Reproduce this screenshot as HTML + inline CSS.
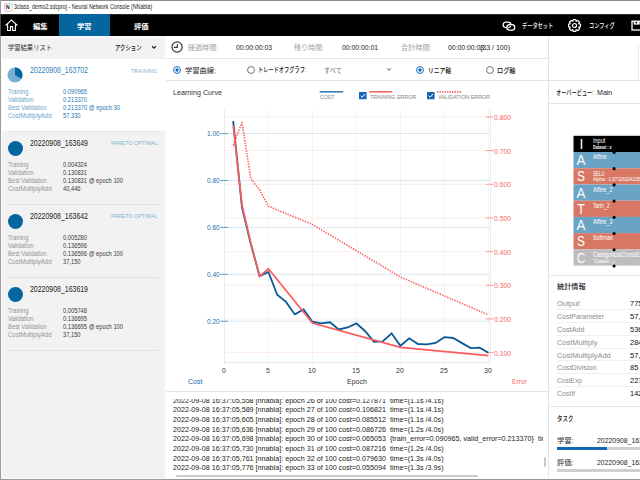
<!DOCTYPE html>
<html lang="ja"><head><meta charset="utf-8"><title>Neural Network Console</title>
<style>
html,body{margin:0;padding:0;background:#fff;}
body{width:640px;height:480px;overflow:hidden;position:relative;font-family:"Liberation Sans", "Noto Sans CJK JP", sans-serif;}
#app{position:absolute;left:0;top:0;width:640px;height:480px;overflow:hidden;background:#fff;}
#app div,#app svg{position:absolute;}
.t{position:absolute;white-space:pre;transform-origin:0 50%;display:block;}
</style></head>
<body>
<div id="app">
<div class="titlebar" style="left:0;top:0;width:640px;height:14px;background:#fff;"><svg style="left:3.5px;top:2.5px;" width="9" height="9" viewBox="0 0 9 9"><path d="M0.8 4.5 V2 A1.2 1.2 0 0 1 2 0.8 H4.5" fill="none" stroke="#ee8d84" stroke-width="0.8"/><path d="M4.5 0.8 H7 A1.2 1.2 0 0 1 8.2 2 V4.5" fill="none" stroke="#86bfe6" stroke-width="0.8"/><path d="M8.2 4.5 V7 A1.2 1.2 0 0 1 7 8.2 H4.5" fill="none" stroke="#f0b878" stroke-width="0.8"/><path d="M4.5 8.2 H2 A1.2 1.2 0 0 1 0.8 7 V4.5" fill="none" stroke="#b7a2dc" stroke-width="0.8"/></svg><span id="t0" class="t" style="left:6.30px;top:4.46px;font-size:5.2px;line-height:7.28px;color:#111;font-weight:700;transform:scaleX(0.9867);">N</span><span id="t1" class="t" style="left:14.25px;top:2.38px;font-size:6.6px;line-height:9.24px;color:#1a1a1a;transform:scaleX(0.8077);">3class_demo2.sdcproj - Neural Network Console (NNabla)</span></div><div class="nav" style="left:0;top:14px;width:640px;height:22px;background:#000;"><div style="left:0;top:-14px;width:640px;height:36px;"><svg style="left:5px;top:19px;" width="13" height="12.5" viewBox="0 0 13 12.5"><path d="M0.6 6.5 L6.5 0.9 L12.4 6.5 M2.6 5.6 V11.5 H5.4 V7.6 H7.6 V11.5 H10.4 V5.6" fill="none" stroke="#fff" stroke-width="1.1" stroke-linejoin="miter"/></svg><div class="ln" style="left:0px;top:14px;width:640px;height:1px;background:#2a2a2a;"></div><span id="t2" class="t" style="left:33.00px;top:21.88px;font-size:6.75px;line-height:9.45px;color:#fff;font-weight:700;transform:scaleX(1.0913);">編集</span><div style="left:59px;top:14px;width:51px;height:22px;background:#04659f;"></div><span id="t3" class="t" style="left:77.00px;top:21.88px;font-size:6.75px;line-height:9.45px;color:#fff;font-weight:700;transform:scaleX(1.0728);">学習</span><span id="t4" class="t" style="left:134.00px;top:21.88px;font-size:6.75px;line-height:9.45px;color:#fff;font-weight:700;transform:scaleX(1.0728);">評価</span><svg style="left:502px;top:20.5px;" width="13.5" height="10" viewBox="0 0 13.5 10"><rect x="1.1" y="1.1" width="7.8" height="5.4" rx="2.7" fill="none" stroke="#fff" stroke-width="1.25"/><rect x="4.9" y="3.7" width="7.8" height="5.4" rx="2.7" fill="#000" stroke="#fff" stroke-width="1.25"/><path d="M8.9 4.6 A2.7 2.7 0 0 1 6.2 6.5" fill="none" stroke="#fff" stroke-width="1.25"/></svg><span id="t5" class="t" style="left:522.25px;top:21.48px;font-size:6.75px;line-height:9.45px;color:#fff;font-weight:500;transform:scaleX(0.7713);">データセット</span><svg style="left:568.25px;top:18.5px;" width="13" height="13" viewBox="0 0 13 13"><polygon points="5.19,0.64 7.81,0.64 8.21,2.34 8.23,2.35 9.71,1.43 11.57,3.29 10.65,4.77 10.66,4.79 12.36,5.19 12.36,7.81 10.66,8.21 10.65,8.23 11.57,9.71 9.71,11.57 8.23,10.65 8.21,10.66 7.81,12.36 5.19,12.36 4.79,10.66 4.77,10.65 3.29,11.57 1.43,9.71 2.35,8.23 2.34,8.21 0.64,7.81 0.64,5.19 2.34,4.79 2.35,4.77 1.43,3.29 3.29,1.43 4.77,2.35 4.79,2.34" fill="none" stroke="#fff" stroke-width="1.2" stroke-linejoin="round"/><circle cx="6.5" cy="6.5" r="2" fill="none" stroke="#fff" stroke-width="1.2"/></svg><span id="t6" class="t" style="left:589.40px;top:21.38px;font-size:6.75px;line-height:9.45px;color:#fff;font-weight:500;transform:scaleX(0.7660);">コンフィグ</span><svg style="left:631px;top:19.5px;" width="12" height="11" viewBox="0 0 12 11"><rect x="1" y="1.2" width="11" height="8.8" fill="none" stroke="#fff" stroke-width="1.3"/><rect x="2.7" y="1.2" width="6" height="3.4" fill="#fff"/><rect x="4.4" y="1.9" width="1.7" height="1.5" fill="#000"/></svg></div></div><div class="left" style="left:0;top:36px;width:165px;height:444px;background:#f2f2f2;"><div style="left:0;top:-36px;width:166px;height:480px;"><div class="ln" style="left:1px;top:36px;width:164px;height:1px;background:#fbfbfb;"></div><span id="t7" class="t" style="left:8.00px;top:43.00px;font-size:6.99px;line-height:9.79px;color:#333;transform:scaleX(0.8997);">学習結果リスト</span><span id="t8" class="t" style="left:115.30px;top:43.00px;font-size:6.99px;line-height:9.79px;color:#111;font-weight:500;transform:scaleX(0.7664);">アクション</span><svg style="left:151.2px;top:44.6px;" width="6" height="5" viewBox="0 0 6 5"><path d="M1.1 1.3 L3 3.2 L4.9 1.3" fill="none" stroke="#222" stroke-width="1.25"/></svg><div style="left:1px;top:59px;width:164px;height:72px;background:#fff;"></div><div class="ln" style="left:8px;top:131px;width:150px;height:1px;background:#e0e0e0;"></div><svg style="left:7px;top:67px;" width="16" height="16" viewBox="0 0 16 16"><circle cx="8" cy="8" r="7.5" fill="#76afd3"/><path d="M8 8 L8 0.5 A7.5 7.5 0 0 1 14.56 11.64 Z" fill="#05659f"/></svg><span id="t9" class="t" style="left:30.00px;top:65.26px;font-size:8.2px;line-height:11.48px;color:#2f7fb7;transform:scaleX(0.8490);">20220908_163702</span><span id="t10" class="t" style="left:131.25px;top:66.66px;font-size:6.2px;line-height:8.68px;color:#7fb3d5;transform:scaleX(0.8875);">TRAINING</span><span id="t11" class="t" style="left:8.00px;top:87.24px;font-size:6.8px;line-height:9.52px;color:#6ba6cd;transform:scaleX(0.8432);">Training</span><span id="t12" class="t" style="left:62.50px;top:87.24px;font-size:6.8px;line-height:9.52px;color:#2779b1;transform:scaleX(0.8463);">0.090965</span><span id="t13" class="t" style="left:8.00px;top:95.14px;font-size:6.8px;line-height:9.52px;color:#6ba6cd;transform:scaleX(0.8685);">Validation</span><span id="t14" class="t" style="left:62.50px;top:95.14px;font-size:6.8px;line-height:9.52px;color:#2779b1;transform:scaleX(0.8463);">0.213370</span><span id="t15" class="t" style="left:8.00px;top:103.04px;font-size:6.8px;line-height:9.52px;color:#6ba6cd;transform:scaleX(0.8585);">Best Validation</span><span id="t16" class="t" style="left:62.50px;top:103.04px;font-size:6.8px;line-height:9.52px;color:#2779b1;transform:scaleX(0.8507);">0.213370 @ epoch 30</span><span id="t17" class="t" style="left:8.00px;top:110.94px;font-size:6.8px;line-height:9.52px;color:#6ba6cd;transform:scaleX(0.8858);">CostMultiplyAdd</span><span id="t18" class="t" style="left:62.50px;top:110.94px;font-size:6.8px;line-height:9.52px;color:#2779b1;transform:scaleX(0.8415);">57,330</span><div class="ln" style="left:8px;top:204px;width:150px;height:1px;background:#e0e0e0;"></div><div style="left:7.5px;top:140.5px;width:15px;height:15px;background:#05659f;border-radius:50%;"></div><span id="t19" class="t" style="left:30.00px;top:138.26px;font-size:8.2px;line-height:11.48px;color:#222;transform:scaleX(0.8490);">20220908_163649</span><span id="t20" class="t" style="left:111.00px;top:138.96px;font-size:6.2px;line-height:8.68px;color:#7fb3d5;transform:scaleX(0.8651);">PARETO OPTIMAL</span><span id="t21" class="t" style="left:8.00px;top:160.24px;font-size:6.8px;line-height:9.52px;color:#939393;transform:scaleX(0.8432);">Training</span><span id="t22" class="t" style="left:62.50px;top:160.24px;font-size:6.8px;line-height:9.52px;color:#3c3c3c;transform:scaleX(0.8463);">0.004324</span><span id="t23" class="t" style="left:8.00px;top:168.14px;font-size:6.8px;line-height:9.52px;color:#939393;transform:scaleX(0.8685);">Validation</span><span id="t24" class="t" style="left:62.50px;top:168.14px;font-size:6.8px;line-height:9.52px;color:#3c3c3c;transform:scaleX(0.8463);">0.130831</span><span id="t25" class="t" style="left:8.00px;top:176.04px;font-size:6.8px;line-height:9.52px;color:#939393;transform:scaleX(0.8585);">Best Validation</span><span id="t26" class="t" style="left:62.50px;top:176.04px;font-size:6.8px;line-height:9.52px;color:#3c3c3c;transform:scaleX(0.8477);">0.130831 @ epoch 100</span><span id="t27" class="t" style="left:8.00px;top:183.94px;font-size:6.8px;line-height:9.52px;color:#939393;transform:scaleX(0.8858);">CostMultiplyAdd</span><span id="t28" class="t" style="left:62.50px;top:183.94px;font-size:6.8px;line-height:9.52px;color:#3c3c3c;transform:scaleX(0.8415);">40,446</span><div class="ln" style="left:8px;top:277px;width:150px;height:1px;background:#e0e0e0;"></div><div style="left:7.5px;top:213.5px;width:15px;height:15px;background:#05659f;border-radius:50%;"></div><span id="t29" class="t" style="left:30.00px;top:211.26px;font-size:8.2px;line-height:11.48px;color:#222;transform:scaleX(0.8490);">20220908_163642</span><span id="t30" class="t" style="left:111.00px;top:211.96px;font-size:6.2px;line-height:8.68px;color:#7fb3d5;transform:scaleX(0.8651);">PARETO OPTIMAL</span><span id="t31" class="t" style="left:8.00px;top:233.24px;font-size:6.8px;line-height:9.52px;color:#939393;transform:scaleX(0.8432);">Training</span><span id="t32" class="t" style="left:62.50px;top:233.24px;font-size:6.8px;line-height:9.52px;color:#3c3c3c;transform:scaleX(0.8463);">0.005280</span><span id="t33" class="t" style="left:8.00px;top:241.14px;font-size:6.8px;line-height:9.52px;color:#939393;transform:scaleX(0.8685);">Validation</span><span id="t34" class="t" style="left:62.50px;top:241.14px;font-size:6.8px;line-height:9.52px;color:#3c3c3c;transform:scaleX(0.8463);">0.136596</span><span id="t35" class="t" style="left:8.00px;top:249.04px;font-size:6.8px;line-height:9.52px;color:#939393;transform:scaleX(0.8585);">Best Validation</span><span id="t36" class="t" style="left:62.50px;top:249.04px;font-size:6.8px;line-height:9.52px;color:#3c3c3c;transform:scaleX(0.8477);">0.136596 @ epoch 100</span><span id="t37" class="t" style="left:8.00px;top:256.94px;font-size:6.8px;line-height:9.52px;color:#939393;transform:scaleX(0.8858);">CostMultiplyAdd</span><span id="t38" class="t" style="left:62.50px;top:256.94px;font-size:6.8px;line-height:9.52px;color:#3c3c3c;transform:scaleX(0.8415);">37,150</span><div class="ln" style="left:8px;top:350px;width:150px;height:1px;background:#e0e0e0;"></div><div style="left:7.5px;top:286.5px;width:15px;height:15px;background:#05659f;border-radius:50%;"></div><span id="t39" class="t" style="left:30.00px;top:284.26px;font-size:8.2px;line-height:11.48px;color:#222;transform:scaleX(0.8490);">20220908_163619</span><span id="t40" class="t" style="left:8.00px;top:306.24px;font-size:6.8px;line-height:9.52px;color:#939393;transform:scaleX(0.8432);">Training</span><span id="t41" class="t" style="left:62.50px;top:306.24px;font-size:6.8px;line-height:9.52px;color:#3c3c3c;transform:scaleX(0.8463);">0.005748</span><span id="t42" class="t" style="left:8.00px;top:314.14px;font-size:6.8px;line-height:9.52px;color:#939393;transform:scaleX(0.8685);">Validation</span><span id="t43" class="t" style="left:62.50px;top:314.14px;font-size:6.8px;line-height:9.52px;color:#3c3c3c;transform:scaleX(0.8463);">0.136695</span><span id="t44" class="t" style="left:8.00px;top:322.04px;font-size:6.8px;line-height:9.52px;color:#939393;transform:scaleX(0.8585);">Best Validation</span><span id="t45" class="t" style="left:62.50px;top:322.04px;font-size:6.8px;line-height:9.52px;color:#3c3c3c;transform:scaleX(0.8477);">0.136695 @ epoch 100</span><span id="t46" class="t" style="left:8.00px;top:329.94px;font-size:6.8px;line-height:9.52px;color:#939393;transform:scaleX(0.8858);">CostMultiplyAdd</span><span id="t47" class="t" style="left:62.50px;top:329.94px;font-size:6.8px;line-height:9.52px;color:#3c3c3c;transform:scaleX(0.8415);">37,150</span></div></div><div class="center" style="left:165px;top:36px;width:383px;height:444px;background:#fff;"><div style="left:-165px;top:-36px;width:548px;height:480px;"><svg style="left:170.5px;top:40.9px;" width="12.2" height="12.2" viewBox="0 0 12.2 12.2"><circle cx="6.05" cy="6" r="5.1" fill="none" stroke="#333" stroke-width="1.2"/><path d="M6.35 3.1 V6.4 H2.8" fill="none" stroke="#333" stroke-width="1.1"/></svg><span id="t48" class="t" style="left:187.80px;top:43.13px;font-size:6.81px;line-height:9.53px;color:#9e9e9e;transform:scaleX(1.0386);">経過時間:</span><span id="t49" class="t" style="left:235.60px;top:43.46px;font-size:7.2px;line-height:10.08px;color:#222;transform:scaleX(0.9478);">00:00:00:03</span><span id="t50" class="t" style="left:294.20px;top:43.13px;font-size:6.81px;line-height:9.53px;color:#9e9e9e;transform:scaleX(1.0248);">残り時間:</span><span id="t51" class="t" style="left:342.00px;top:43.46px;font-size:7.2px;line-height:10.08px;color:#222;transform:scaleX(0.9478);">00:00:00:01</span><span id="t52" class="t" style="left:400.50px;top:43.13px;font-size:6.81px;line-height:9.53px;color:#9e9e9e;transform:scaleX(1.0489);">合計時間:</span><span id="t53" class="t" style="left:448.00px;top:43.46px;font-size:7.2px;line-height:10.08px;color:#222;transform:scaleX(0.9478);">00:00:00:03</span><span id="t54" class="t" style="left:480.00px;top:43.46px;font-size:7.2px;line-height:10.08px;color:#222;transform:scaleX(0.9751);">(33 / 100)</span><div class="ln" style="left:166px;top:58px;width:382px;height:1px;background:#e4e4e4;"></div><svg style="left:172px;top:64.5px;" width="10" height="10" viewBox="0 0 10 10"><circle cx="5" cy="5" r="3.45" fill="#fff" stroke="#1573c4" stroke-width="1"/><circle cx="5" cy="5" r="1.7" fill="#1468c0"/></svg><span id="t55" class="t" style="left:185.30px;top:65.64px;font-size:6.81px;line-height:9.53px;color:#222;transform:scaleX(1.0661);">学習曲線:</span><svg style="left:245.9px;top:64.5px;" width="10" height="10" viewBox="0 0 10 10"><circle cx="5" cy="5" r="3.45" fill="#fff" stroke="#555" stroke-width="0.8"/></svg><span id="t56" class="t" style="left:257.60px;top:65.23px;font-size:6.81px;line-height:9.53px;color:#111;font-weight:500;transform:scaleX(0.7675);">トレードオフグラフ:</span><span id="t57" class="t" style="left:324.00px;top:65.77px;font-size:6.62px;line-height:9.27px;color:#6e6e6e;transform:scaleX(0.9419);">すべて</span><svg style="left:385.5px;top:67.3px;" width="6" height="5" viewBox="0 0 6 5"><path d="M1.1 1.4 L3 3.3 L4.9 1.4" fill="none" stroke="#444" stroke-width="1"/></svg><svg style="left:414.8px;top:64.6px;" width="10" height="10" viewBox="0 0 10 10"><circle cx="5" cy="5" r="3.45" fill="#fff" stroke="#1573c4" stroke-width="1"/><circle cx="5" cy="5" r="1.7" fill="#1468c0"/></svg><span id="t58" class="t" style="left:428.00px;top:65.64px;font-size:6.81px;line-height:9.53px;color:#111;font-weight:500;transform:scaleX(0.8460);">リニア軸</span><svg style="left:484.6px;top:64.6px;" width="10" height="10" viewBox="0 0 10 10"><circle cx="5" cy="5" r="3.45" fill="#fff" stroke="#555" stroke-width="0.8"/></svg><span id="t59" class="t" style="left:497.00px;top:65.64px;font-size:6.81px;line-height:9.53px;color:#111;font-weight:500;transform:scaleX(0.9073);">ログ軸</span><div class="ln" style="left:166px;top:80px;width:382px;height:1px;background:#e4e4e4;"></div><svg class="chart" style="left:166px;top:81px;" width="382" height="310" viewBox="166 81 382 310"><line x1="268.5" y1="110" x2="268.5" y2="365" stroke="#f3f5f8" stroke-width="1"/><line x1="312.5" y1="110" x2="312.5" y2="365" stroke="#f3f5f8" stroke-width="1"/><line x1="356.5" y1="110" x2="356.5" y2="365" stroke="#f3f5f8" stroke-width="1"/><line x1="400.5" y1="110" x2="400.5" y2="365" stroke="#f3f5f8" stroke-width="1"/><line x1="444.5" y1="110" x2="444.5" y2="365" stroke="#f3f5f8" stroke-width="1"/><line x1="488.5" y1="110" x2="488.5" y2="365" stroke="#f3f5f8" stroke-width="1"/><line x1="224" y1="133.6" x2="490" y2="133.6" stroke="#d9e5f1" stroke-width="1"/><line x1="224" y1="180.5" x2="490" y2="180.5" stroke="#d9e5f1" stroke-width="1"/><line x1="224" y1="227.4" x2="490" y2="227.4" stroke="#d9e5f1" stroke-width="1"/><line x1="224" y1="274.3" x2="490" y2="274.3" stroke="#d9e5f1" stroke-width="1"/><line x1="224" y1="321.2" x2="490" y2="321.2" stroke="#d9e5f1" stroke-width="1"/><line x1="224" y1="116.9" x2="490" y2="116.9" stroke="#fdecec" stroke-width="1"/><line x1="224" y1="150.6" x2="490" y2="150.6" stroke="#fdecec" stroke-width="1"/><line x1="224" y1="184.3" x2="490" y2="184.3" stroke="#fdecec" stroke-width="1"/><line x1="224" y1="217.9" x2="490" y2="217.9" stroke="#fdecec" stroke-width="1"/><line x1="224" y1="251.6" x2="490" y2="251.6" stroke="#fdecec" stroke-width="1"/><line x1="224" y1="285.3" x2="490" y2="285.3" stroke="#fdecec" stroke-width="1"/><line x1="224" y1="318.9" x2="490" y2="318.9" stroke="#fdecec" stroke-width="1"/><line x1="224" y1="352.6" x2="490" y2="352.6" stroke="#fdecec" stroke-width="1"/><line x1="224.5" y1="110" x2="224.5" y2="365" stroke="#eaeaea" stroke-width="1"/><line x1="490.5" y1="110" x2="490.5" y2="362" stroke="#eaeaea" stroke-width="1"/><line x1="224" y1="362.5" x2="491" y2="362.5" stroke="#eaeaea" stroke-width="1"/><line x1="220.5" y1="133.6" x2="228" y2="133.6" stroke="#5f97c4" stroke-width="1"/><line x1="220.5" y1="180.5" x2="228" y2="180.5" stroke="#5f97c4" stroke-width="1"/><line x1="220.5" y1="227.4" x2="228" y2="227.4" stroke="#5f97c4" stroke-width="1"/><line x1="220.5" y1="274.3" x2="228" y2="274.3" stroke="#5f97c4" stroke-width="1"/><line x1="220.5" y1="321.2" x2="228" y2="321.2" stroke="#5f97c4" stroke-width="1"/><line x1="486" y1="116.9" x2="493.4" y2="116.9" stroke="#f99a9a" stroke-width="1"/><line x1="486" y1="150.6" x2="493.4" y2="150.6" stroke="#f99a9a" stroke-width="1"/><line x1="486" y1="184.3" x2="493.4" y2="184.3" stroke="#f99a9a" stroke-width="1"/><line x1="486" y1="217.9" x2="493.4" y2="217.9" stroke="#f99a9a" stroke-width="1"/><line x1="486" y1="251.6" x2="493.4" y2="251.6" stroke="#f99a9a" stroke-width="1"/><line x1="486" y1="285.3" x2="493.4" y2="285.3" stroke="#f99a9a" stroke-width="1"/><line x1="486" y1="318.9" x2="493.4" y2="318.9" stroke="#f99a9a" stroke-width="1"/><line x1="486" y1="352.6" x2="493.4" y2="352.6" stroke="#f99a9a" stroke-width="1"/><polyline points="233.20,121 242.00,207.5 250.80,244 259.60,276.1 268.40,271.9 277.20,294.8 286.00,301.9 294.80,314.4 303.60,309.4 312.40,321.7 321.20,323.4 330.00,322.3 338.80,329.5 347.60,327.5 356.40,323.4 365.20,331.25 374.00,341.9 382.80,341.4 391.60,333.3 400.40,345.8 409.20,338.3 418.00,344 426.80,344.4 435.60,343 444.40,337.2 453.20,338 462.00,343.1 470.80,348.1 479.60,347.7 488.40,352.8" fill="none" stroke="#0b5a98" stroke-width="1.8" stroke-linejoin="miter"/><polyline points="233.20,125.6 242.00,205 250.80,243 259.60,276.5 268.40,268.75 312.40,323 400.40,347.3 488.40,355.7" fill="none" stroke="#fb5c5c" stroke-width="1.7" stroke-linejoin="miter"/><polyline points="233.20,145.6 242.00,122.5 250.80,178.75 259.60,190 268.40,206.25 312.40,224.5 400.40,277 488.40,314.9" fill="none" stroke="#fb5c5c" stroke-width="1.6" stroke-dasharray="1.4 1.25" stroke-linejoin="round"/><line x1="319.7" y1="91.8" x2="343.2" y2="91.8" stroke="#2f76b3" stroke-width="1.5"/><line x1="369.4" y1="91.8" x2="392.3" y2="91.8" stroke="#fb5c5c" stroke-width="1.5"/><line x1="437.1" y1="91.8" x2="461.2" y2="91.8" stroke="#fb5c5c" stroke-width="1.7" stroke-dasharray="1.3 1.2"/></svg><span id="t60" class="t" style="left:207.30px;top:129.38px;font-size:7.6px;line-height:10.64px;color:#1f6ba6;transform:scaleX(0.8592);">1.00</span><span id="t61" class="t" style="left:207.30px;top:176.28px;font-size:7.6px;line-height:10.64px;color:#1f6ba6;transform:scaleX(0.8592);">0.80</span><span id="t62" class="t" style="left:207.30px;top:223.18px;font-size:7.6px;line-height:10.64px;color:#1f6ba6;transform:scaleX(0.8592);">0.60</span><span id="t63" class="t" style="left:207.30px;top:270.08px;font-size:7.6px;line-height:10.64px;color:#1f6ba6;transform:scaleX(0.8592);">0.40</span><span id="t64" class="t" style="left:207.30px;top:316.98px;font-size:7.6px;line-height:10.64px;color:#1f6ba6;transform:scaleX(0.8592);">0.20</span><span id="t65" class="t" style="left:494.00px;top:112.88px;font-size:7.6px;line-height:10.64px;color:#f96464;transform:scaleX(0.9045);">0.800</span><span id="t66" class="t" style="left:494.00px;top:146.58px;font-size:7.6px;line-height:10.64px;color:#f96464;transform:scaleX(0.9045);">0.700</span><span id="t67" class="t" style="left:494.00px;top:180.28px;font-size:7.6px;line-height:10.64px;color:#f96464;transform:scaleX(0.9045);">0.600</span><span id="t68" class="t" style="left:494.00px;top:213.88px;font-size:7.6px;line-height:10.64px;color:#f96464;transform:scaleX(0.9045);">0.500</span><span id="t69" class="t" style="left:494.00px;top:247.58px;font-size:7.6px;line-height:10.64px;color:#f96464;transform:scaleX(0.9045);">0.400</span><span id="t70" class="t" style="left:494.00px;top:281.28px;font-size:7.6px;line-height:10.64px;color:#f96464;transform:scaleX(0.9045);">0.300</span><span id="t71" class="t" style="left:494.00px;top:314.88px;font-size:7.6px;line-height:10.64px;color:#f96464;transform:scaleX(0.9045);">0.200</span><span id="t72" class="t" style="left:494.00px;top:348.58px;font-size:7.6px;line-height:10.64px;color:#f96464;transform:scaleX(0.9045);">0.100</span><span id="t73" class="t" style="left:222.20px;top:366.12px;font-size:7.4px;line-height:10.36px;color:#333;transform:scaleX(0.9212);">0</span><span id="t74" class="t" style="left:266.20px;top:366.12px;font-size:7.4px;line-height:10.36px;color:#333;transform:scaleX(0.9212);">5</span><span id="t75" class="t" style="left:308.20px;top:366.12px;font-size:7.4px;line-height:10.36px;color:#333;transform:scaleX(0.9472);">10</span><span id="t76" class="t" style="left:352.20px;top:366.12px;font-size:7.4px;line-height:10.36px;color:#333;transform:scaleX(0.9472);">15</span><span id="t77" class="t" style="left:396.20px;top:366.12px;font-size:7.4px;line-height:10.36px;color:#333;transform:scaleX(0.9472);">20</span><span id="t78" class="t" style="left:440.20px;top:366.12px;font-size:7.4px;line-height:10.36px;color:#333;transform:scaleX(0.9472);">25</span><span id="t79" class="t" style="left:484.20px;top:366.12px;font-size:7.4px;line-height:10.36px;color:#333;transform:scaleX(0.9472);">30</span><span id="t80" class="t" style="left:187.50px;top:376.68px;font-size:7.6px;line-height:10.64px;color:#1f6ba6;transform:scaleX(0.9344);">Cost</span><span id="t81" class="t" style="left:347.30px;top:376.88px;font-size:7.6px;line-height:10.64px;color:#333;transform:scaleX(0.9189);">Epoch</span><span id="t82" class="t" style="left:512.00px;top:376.88px;font-size:7.6px;line-height:10.64px;color:#f96464;transform:scaleX(0.8770);">Error</span><span id="t83" class="t" style="left:172.50px;top:88.14px;font-size:7.8px;line-height:10.92px;color:#333;transform:scaleX(0.9191);">Learning Curve</span><span id="t84" class="t" style="left:320.00px;top:94.38px;font-size:5.6px;line-height:7.84px;color:#858585;transform:scaleX(0.9327);">COST</span><svg style="left:358.5px;top:92px;" width="8" height="7.5" viewBox="0 0 8 7.5"><rect x="0" y="0" width="7.6" height="7.2" rx="0.6" fill="#1565b8"/><path d="M1.7 3.7 L3.2 5.2 L6 2" fill="none" stroke="#fff" stroke-width="1"/></svg><span id="t85" class="t" style="left:370.00px;top:94.38px;font-size:5.6px;line-height:7.84px;color:#858585;transform:scaleX(0.9549);">TRAINING ERROR</span><svg style="left:426.8px;top:92px;" width="8" height="7.5" viewBox="0 0 8 7.5"><rect x="0" y="0" width="7.6" height="7.2" rx="0.6" fill="#1565b8"/><path d="M1.7 3.7 L3.2 5.2 L6 2" fill="none" stroke="#fff" stroke-width="1"/></svg><span id="t86" class="t" style="left:438.00px;top:94.38px;font-size:5.6px;line-height:7.84px;color:#858585;transform:scaleX(0.9633);">VALIDATION ERROR</span><div class="ln" style="left:166px;top:391px;width:382px;height:1px;background:#e4e4e4;"></div><div class="log" style="left:166px;top:399px;width:376.5px;height:74px;overflow:hidden;"><div style="left:-166px;top:-399px;width:700px;height:480px;"><span id="t87" class="t" style="left:173.20px;top:395.76px;font-size:7.2px;line-height:10.08px;color:#222;transform:scaleX(0.9986);">2022-09-08 16:37:05,558 [nnabla]: epoch 26 of 100 cost=0.127871  time=(1.1s /4.1s)</span><span id="t88" class="t" style="left:173.20px;top:405.42px;font-size:7.2px;line-height:10.08px;color:#222;transform:scaleX(0.9986);">2022-09-08 16:37:05,589 [nnabla]: epoch 27 of 100 cost=0.106821  time=(1.1s /4.1s)</span><span id="t89" class="t" style="left:173.20px;top:415.08px;font-size:7.2px;line-height:10.08px;color:#222;transform:scaleX(0.9986);">2022-09-08 16:37:05,605 [nnabla]: epoch 28 of 100 cost=0.085512  time=(1.1s /4.0s)</span><span id="t90" class="t" style="left:173.20px;top:424.74px;font-size:7.2px;line-height:10.08px;color:#222;transform:scaleX(0.9986);">2022-09-08 16:37:05,636 [nnabla]: epoch 29 of 100 cost=0.086726  time=(1.2s /4.0s)</span><span id="t91" class="t" style="left:173.20px;top:434.40px;font-size:7.2px;line-height:10.08px;color:#222;transform:scaleX(0.9986);">2022-09-08 16:37:05,698 [nnabla]: epoch 30 of 100 cost=0.065053  {train_error=0.090965, valid_error=0.213370}  time=(1.2s /4.0s)</span><span id="t92" class="t" style="left:173.20px;top:444.06px;font-size:7.2px;line-height:10.08px;color:#222;transform:scaleX(0.9986);">2022-09-08 16:37:05,730 [nnabla]: epoch 31 of 100 cost=0.087216  time=(1.2s /4.0s)</span><span id="t93" class="t" style="left:173.20px;top:453.72px;font-size:7.2px;line-height:10.08px;color:#222;transform:scaleX(0.9986);">2022-09-08 16:37:05,761 [nnabla]: epoch 32 of 100 cost=0.079630  time=(1.3s /4.0s)</span><span id="t94" class="t" style="left:173.20px;top:463.38px;font-size:7.2px;line-height:10.08px;color:#222;transform:scaleX(0.9986);">2022-09-08 16:37:05,776 [nnabla]: epoch 33 of 100 cost=0.055094  time=(1.3s /3.9s)</span></div></div><div style="left:176.3px;top:474.6px;width:302px;height:2.2px;background:#c9c9c9;border-radius:1px;"></div><div style="left:543.6px;top:457px;width:2.2px;height:9.6px;background:#c9c9c9;border-radius:1px;"></div></div></div><div class="ln" style="left:548px;top:36px;width:1px;height:444px;background:#e4e4e4;"></div><div class="right" style="left:549px;top:36px;width:91px;height:444px;background:#fff;"><div style="left:-549px;top:-36px;width:640px;height:480px;"><div class="ln" style="left:549px;top:80px;width:91px;height:1px;background:#e4e4e4;"></div><span id="t95" class="t" style="left:556.25px;top:88.01px;font-size:6.99px;line-height:9.79px;color:#111;font-weight:500;transform:scaleX(0.7436);">オーバービュー:</span><span id="t96" class="t" style="left:596.60px;top:88.18px;font-size:7.6px;line-height:10.64px;color:#222;transform:scaleX(0.9290);">Main</span><div class="ln" style="left:549px;top:103px;width:91px;height:1px;background:#e4e4e4;"></div><div class="ln" style="left:638px;top:45px;width:1px;height:35px;background:#ececec;"></div><svg class="net" style="left:570px;top:130px;" width="70" height="142" viewBox="570 130 70 142"><rect x="573.5" y="135.80" width="67" height="16.24" fill="#000"/><rect x="573.5" y="152.02" width="67" height="16.24" fill="#69a3c5"/><rect x="573.5" y="168.24" width="67" height="16.24" fill="#d97765"/><rect x="573.5" y="184.46" width="67" height="16.24" fill="#69a3c5"/><rect x="573.5" y="200.68" width="67" height="16.24" fill="#d97765"/><rect x="573.5" y="216.90" width="67" height="16.24" fill="#69a3c5"/><rect x="573.5" y="233.12" width="67" height="16.24" fill="#d97765"/><rect x="573.5" y="249.34" width="67" height="16.24" fill="#bdbdbd"/><circle cx="614.1" cy="152.42" r="1.55" fill="#000"/><circle cx="614.1" cy="168.64" r="1.55" fill="#000"/><circle cx="614.1" cy="184.86" r="1.55" fill="#000"/><circle cx="614.1" cy="201.08" r="1.55" fill="#000"/><circle cx="614.1" cy="217.30" r="1.55" fill="#000"/><circle cx="614.1" cy="233.52" r="1.55" fill="#000"/><circle cx="614.1" cy="249.74" r="1.55" fill="#000"/><circle cx="614.1" cy="265.96" r="1.55" fill="#000"/></svg><span id="t97" class="t" style="left:581.40px;top:135.04px;font-size:13.8px;line-height:19.32px;color:#fff;transform:translateX(-50%) scaleX(1.0000);transform-origin:50% 50%;">I</span><span id="t98" class="t" style="left:592.80px;top:137.12px;font-size:6.4px;line-height:8.96px;color:#fff;transform:scaleX(0.8651);">Input</span><span id="t99" class="t" style="left:592.80px;top:145.04px;font-size:4.8px;line-height:6.72px;color:#fff;font-weight:700;transform:scaleX(0.7624);">Dataset : x</span><span id="t100" class="t" style="left:581.40px;top:151.26px;font-size:13.8px;line-height:19.32px;color:#fff;transform:translateX(-50%) scaleX(0.9700);transform-origin:50% 50%;">A</span><span id="t101" class="t" style="left:592.80px;top:153.34px;font-size:6.4px;line-height:8.96px;color:#fff;transform:scaleX(0.8500);">Affine</span><span id="t102" class="t" style="left:581.40px;top:167.48px;font-size:13.8px;line-height:19.32px;color:#fff;transform:translateX(-50%) scaleX(0.8600);transform-origin:50% 50%;">S</span><span id="t103" class="t" style="left:592.80px;top:169.56px;font-size:6.4px;line-height:8.96px;color:#fff;transform:scaleX(0.6885);">SELU</span><span id="t104" class="t" style="left:592.80px;top:177.48px;font-size:4.8px;line-height:6.72px;color:#fff;transform:scaleX(0.9531);">Alpha : 1.6732632423543772</span><span id="t105" class="t" style="left:581.40px;top:183.70px;font-size:13.8px;line-height:19.32px;color:#fff;transform:translateX(-50%) scaleX(0.9700);transform-origin:50% 50%;">A</span><span id="t106" class="t" style="left:592.80px;top:185.78px;font-size:6.4px;line-height:8.96px;color:#fff;transform:scaleX(0.8353);">Affine_2</span><span id="t107" class="t" style="left:581.40px;top:199.92px;font-size:13.8px;line-height:19.32px;color:#fff;transform:translateX(-50%) scaleX(0.9000);transform-origin:50% 50%;">T</span><span id="t108" class="t" style="left:592.80px;top:202.00px;font-size:6.4px;line-height:8.96px;color:#fff;transform:scaleX(0.7869);">Tanh_2</span><span id="t109" class="t" style="left:581.40px;top:216.14px;font-size:13.8px;line-height:19.32px;color:#fff;transform:translateX(-50%) scaleX(0.9700);transform-origin:50% 50%;">A</span><span id="t110" class="t" style="left:592.80px;top:218.22px;font-size:6.4px;line-height:8.96px;color:#fff;transform:scaleX(0.8353);">Affine_3</span><span id="t111" class="t" style="left:581.40px;top:232.36px;font-size:13.8px;line-height:19.32px;color:#fff;transform:translateX(-50%) scaleX(0.8600);transform-origin:50% 50%;">S</span><span id="t112" class="t" style="left:592.80px;top:234.44px;font-size:6.4px;line-height:8.96px;color:#fff;transform:scaleX(0.8442);">Softmax</span><span id="t113" class="t" style="left:581.40px;top:248.58px;font-size:13.8px;line-height:19.32px;color:#fff;transform:translateX(-50%) scaleX(0.8600);transform-origin:50% 50%;">C</span><span id="t114" class="t" style="left:592.80px;top:250.66px;font-size:6.4px;line-height:8.96px;color:#fff;transform:scaleX(0.8727);">CategoricalCrossEntropy</span><span id="t115" class="t" style="left:592.80px;top:258.58px;font-size:4.8px;line-height:6.72px;color:#fff;transform:scaleX(0.8061);">T.Dataset : y</span><div class="ln" style="left:549px;top:274.5px;width:91px;height:1px;background:#e4e4e4;"></div><span id="t116" class="t" style="left:556.50px;top:281.94px;font-size:6.81px;line-height:9.53px;color:#111;font-weight:500;transform:scaleX(1.0483);">統計情報</span><span id="t117" class="t" style="left:556.50px;top:299.48px;font-size:7.6px;line-height:10.64px;color:#8c8c8c;transform:scaleX(0.9870);">Output</span><span id="t118" class="t" style="left:629.80px;top:299.48px;font-size:7.6px;line-height:10.64px;color:#111;transform:scaleX(0.9864);">775</span><div class="ln" style="left:556.5px;top:309.2px;width:83.5px;height:1px;background:#f0f0f0;"></div><span id="t119" class="t" style="left:556.50px;top:312.28px;font-size:7.6px;line-height:10.64px;color:#8c8c8c;transform:scaleX(0.9202);">CostParameter</span><span id="t120" class="t" style="left:629.80px;top:312.28px;font-size:7.6px;line-height:10.64px;color:#111;transform:scaleX(0.9899);">57,330</span><div class="ln" style="left:556.5px;top:322.0px;width:83.5px;height:1px;background:#f0f0f0;"></div><span id="t121" class="t" style="left:556.50px;top:325.08px;font-size:7.6px;line-height:10.64px;color:#8c8c8c;transform:scaleX(0.9437);">CostAdd</span><span id="t122" class="t" style="left:629.80px;top:325.08px;font-size:7.6px;line-height:10.64px;color:#111;transform:scaleX(0.9864);">536</span><div class="ln" style="left:556.5px;top:334.8px;width:83.5px;height:1px;background:#f0f0f0;"></div><span id="t123" class="t" style="left:556.50px;top:337.88px;font-size:7.6px;line-height:10.64px;color:#8c8c8c;transform:scaleX(0.9792);">CostMultiply</span><span id="t124" class="t" style="left:629.80px;top:337.88px;font-size:7.6px;line-height:10.64px;color:#111;transform:scaleX(0.9864);">284</span><div class="ln" style="left:556.5px;top:347.6px;width:83.5px;height:1px;background:#f0f0f0;"></div><span id="t125" class="t" style="left:556.50px;top:350.68px;font-size:7.6px;line-height:10.64px;color:#8c8c8c;transform:scaleX(0.9786);">CostMultiplyAdd</span><span id="t126" class="t" style="left:629.80px;top:350.68px;font-size:7.6px;line-height:10.64px;color:#111;transform:scaleX(0.9899);">57,330</span><div class="ln" style="left:556.5px;top:360.4px;width:83.5px;height:1px;background:#f0f0f0;"></div><span id="t127" class="t" style="left:556.50px;top:363.48px;font-size:7.6px;line-height:10.64px;color:#8c8c8c;transform:scaleX(0.9359);">CostDivision</span><span id="t128" class="t" style="left:629.80px;top:363.48px;font-size:7.6px;line-height:10.64px;color:#111;transform:scaleX(0.9819);">85</span><div class="ln" style="left:556.5px;top:373.2px;width:83.5px;height:1px;background:#f0f0f0;"></div><span id="t129" class="t" style="left:556.50px;top:376.28px;font-size:7.6px;line-height:10.64px;color:#8c8c8c;transform:scaleX(0.8710);">CostExp</span><span id="t130" class="t" style="left:629.80px;top:376.28px;font-size:7.6px;line-height:10.64px;color:#111;transform:scaleX(0.9864);">227</span><div class="ln" style="left:556.5px;top:386.0px;width:83.5px;height:1px;background:#f0f0f0;"></div><span id="t131" class="t" style="left:556.50px;top:389.08px;font-size:7.6px;line-height:10.64px;color:#8c8c8c;transform:scaleX(0.9071);">CostIf</span><span id="t132" class="t" style="left:629.80px;top:389.08px;font-size:7.6px;line-height:10.64px;color:#111;transform:scaleX(0.9864);">142</span><div class="ln" style="left:549px;top:406px;width:91px;height:1px;background:#e4e4e4;"></div><span id="t133" class="t" style="left:556.50px;top:413.50px;font-size:6.99px;line-height:9.79px;color:#111;font-weight:500;transform:scaleX(0.7869);">タスク</span><span id="t134" class="t" style="left:556.50px;top:435.63px;font-size:6.81px;line-height:9.53px;color:#222;transform:scaleX(1.0656);">学習:</span><span id="t135" class="t" style="left:596.60px;top:435.68px;font-size:7.6px;line-height:10.64px;color:#222;transform:scaleX(0.9059);">20220908_163702</span><div style="left:556.5px;top:447.3px;width:84px;height:3px;background:#cfcfcf;"></div><div style="left:556.5px;top:447.3px;width:50px;height:3px;background:#1367b8;"></div><span id="t136" class="t" style="left:556.50px;top:457.83px;font-size:6.81px;line-height:9.53px;color:#222;transform:scaleX(1.0656);">評価:</span><span id="t137" class="t" style="left:596.60px;top:457.88px;font-size:7.6px;line-height:10.64px;color:#222;transform:scaleX(0.9059);">20220908_163702</span><div style="left:556.5px;top:469.2px;width:84px;height:3px;background:#cfcfcf;"></div></div></div><div class="ln" style="left:1px;top:36px;width:1px;height:443px;background:#fbfbfb;"></div><div class="ln" style="left:1px;top:478px;width:639px;height:1px;background:#fbfbfb;"></div><div class="ln" style="left:0px;top:0px;width:640px;height:1px;background:#8c8c8c;"></div><div class="ln" style="left:0px;top:0px;width:1px;height:480px;background:#9c9c9c;"></div><div class="ln" style="left:0px;top:14px;width:1px;height:22px;background:#4a4a4a;"></div><div class="ln" style="left:0px;top:479px;width:640px;height:1px;background:#9a9a9a;"></div>
</div>
</body></html>
